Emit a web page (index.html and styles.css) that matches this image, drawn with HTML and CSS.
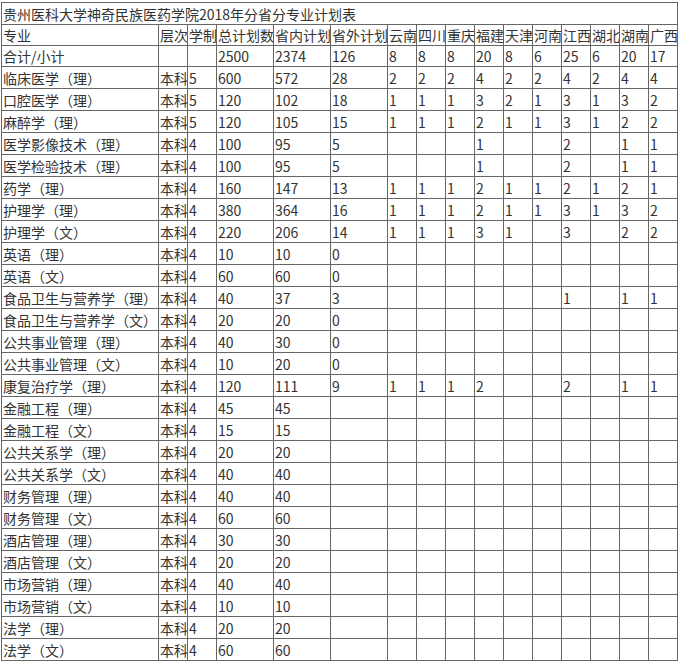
FILE: index.html
```html
<!DOCTYPE html>
<html lang="zh-CN">
<head>
<meta charset="utf-8">
<title>贵州医科大学神奇民族医药学院2018年分省分专业计划表</title>
<link rel="stylesheet" href="styles.css">
</head>
<body>
<table class="plan">
<colgroup>
<col class="c-major"><col class="c-s"><col class="c-s"><col class="c-m"><col class="c-m"><col class="c-m">
<col class="c-s"><col class="c-s"><col class="c-s"><col class="c-s"><col class="c-s"><col class="c-s"><col class="c-s"><col class="c-s"><col class="c-s"><col class="c-s">
</colgroup>
<tbody>
<tr class="title"><td colspan="16">贵州医科大学神奇民族医药学院2018年分省分专业计划表</td></tr>
<tr class="compact"><td>专业</td><td>层次</td><td>学制</td><td>总计划数</td><td>省内计划</td><td>省外计划</td><td>云南</td><td>四川</td><td>重庆</td><td>福建</td><td>天津</td><td>河南</td><td>江西</td><td>湖北</td><td>湖南</td><td>广西</td></tr>
<tr class="compact"><td>合计/小计</td><td></td><td></td><td>2500</td><td>2374</td><td>126</td><td>8</td><td>8</td><td>8</td><td>20</td><td>8</td><td>6</td><td>25</td><td>6</td><td>20</td><td>17</td></tr>
<tr><td>临床医学（理）</td><td>本科</td><td>5</td><td>600</td><td>572</td><td>28</td><td>2</td><td>2</td><td>2</td><td>4</td><td>2</td><td>2</td><td>4</td><td>2</td><td>4</td><td>4</td></tr>
<tr><td>口腔医学（理）</td><td>本科</td><td>5</td><td>120</td><td>102</td><td>18</td><td>1</td><td>1</td><td>1</td><td>3</td><td>2</td><td>1</td><td>3</td><td>1</td><td>3</td><td>2</td></tr>
<tr><td>麻醉学（理）</td><td>本科</td><td>5</td><td>120</td><td>105</td><td>15</td><td>1</td><td>1</td><td>1</td><td>2</td><td>1</td><td>1</td><td>3</td><td>1</td><td>2</td><td>2</td></tr>
<tr><td>医学影像技术（理）</td><td>本科</td><td>4</td><td>100</td><td>95</td><td>5</td><td></td><td></td><td></td><td>1</td><td></td><td></td><td>2</td><td></td><td>1</td><td>1</td></tr>
<tr><td>医学检验技术（理）</td><td>本科</td><td>4</td><td>100</td><td>95</td><td>5</td><td></td><td></td><td></td><td>1</td><td></td><td></td><td>2</td><td></td><td>1</td><td>1</td></tr>
<tr><td>药学（理）</td><td>本科</td><td>4</td><td>160</td><td>147</td><td>13</td><td>1</td><td>1</td><td>1</td><td>2</td><td>1</td><td>1</td><td>2</td><td>1</td><td>2</td><td>1</td></tr>
<tr><td>护理学（理）</td><td>本科</td><td>4</td><td>380</td><td>364</td><td>16</td><td>1</td><td>1</td><td>1</td><td>2</td><td>1</td><td>1</td><td>3</td><td>1</td><td>3</td><td>2</td></tr>
<tr><td>护理学（文）</td><td>本科</td><td>4</td><td>220</td><td>206</td><td>14</td><td>1</td><td>1</td><td>1</td><td>3</td><td>1</td><td></td><td>3</td><td></td><td>2</td><td>2</td></tr>
<tr><td>英语（理）</td><td>本科</td><td>4</td><td>10</td><td>10</td><td>0</td><td></td><td></td><td></td><td></td><td></td><td></td><td></td><td></td><td></td><td></td></tr>
<tr><td>英语（文）</td><td>本科</td><td>4</td><td>60</td><td>60</td><td>0</td><td></td><td></td><td></td><td></td><td></td><td></td><td></td><td></td><td></td><td></td></tr>
<tr><td>食品卫生与营养学（理）</td><td>本科</td><td>4</td><td>40</td><td>37</td><td>3</td><td></td><td></td><td></td><td></td><td></td><td></td><td>1</td><td></td><td>1</td><td>1</td></tr>
<tr><td>食品卫生与营养学（文）</td><td>本科</td><td>4</td><td>20</td><td>20</td><td>0</td><td></td><td></td><td></td><td></td><td></td><td></td><td></td><td></td><td></td><td></td></tr>
<tr><td>公共事业管理（理）</td><td>本科</td><td>4</td><td>40</td><td>30</td><td>0</td><td></td><td></td><td></td><td></td><td></td><td></td><td></td><td></td><td></td><td></td></tr>
<tr><td>公共事业管理（文）</td><td>本科</td><td>4</td><td>10</td><td>20</td><td>0</td><td></td><td></td><td></td><td></td><td></td><td></td><td></td><td></td><td></td><td></td></tr>
<tr><td>康复治疗学（理）</td><td>本科</td><td>4</td><td>120</td><td>111</td><td>9</td><td>1</td><td>1</td><td>1</td><td>2</td><td></td><td></td><td>2</td><td></td><td>1</td><td>1</td></tr>
<tr><td>金融工程（理）</td><td>本科</td><td>4</td><td>45</td><td>45</td><td></td><td></td><td></td><td></td><td></td><td></td><td></td><td></td><td></td><td></td><td></td></tr>
<tr><td>金融工程（文）</td><td>本科</td><td>4</td><td>15</td><td>15</td><td></td><td></td><td></td><td></td><td></td><td></td><td></td><td></td><td></td><td></td><td></td></tr>
<tr><td>公共关系学（理）</td><td>本科</td><td>4</td><td>20</td><td>20</td><td></td><td></td><td></td><td></td><td></td><td></td><td></td><td></td><td></td><td></td><td></td></tr>
<tr><td>公共关系学（文）</td><td>本科</td><td>4</td><td>40</td><td>40</td><td></td><td></td><td></td><td></td><td></td><td></td><td></td><td></td><td></td><td></td><td></td></tr>
<tr><td>财务管理（理）</td><td>本科</td><td>4</td><td>40</td><td>40</td><td></td><td></td><td></td><td></td><td></td><td></td><td></td><td></td><td></td><td></td><td></td></tr>
<tr><td>财务管理（文）</td><td>本科</td><td>4</td><td>60</td><td>60</td><td></td><td></td><td></td><td></td><td></td><td></td><td></td><td></td><td></td><td></td><td></td></tr>
<tr><td>酒店管理（理）</td><td>本科</td><td>4</td><td>30</td><td>30</td><td></td><td></td><td></td><td></td><td></td><td></td><td></td><td></td><td></td><td></td><td></td></tr>
<tr><td>酒店管理（文）</td><td>本科</td><td>4</td><td>20</td><td>20</td><td></td><td></td><td></td><td></td><td></td><td></td><td></td><td></td><td></td><td></td><td></td></tr>
<tr><td>市场营销（理）</td><td>本科</td><td>4</td><td>40</td><td>40</td><td></td><td></td><td></td><td></td><td></td><td></td><td></td><td></td><td></td><td></td><td></td></tr>
<tr><td>市场营销（文）</td><td>本科</td><td>4</td><td>10</td><td>10</td><td></td><td></td><td></td><td></td><td></td><td></td><td></td><td></td><td></td><td></td><td></td></tr>
<tr><td>法学（理）</td><td>本科</td><td>4</td><td>20</td><td>20</td><td></td><td></td><td></td><td></td><td></td><td></td><td></td><td></td><td></td><td></td><td></td></tr>
<tr><td>法学（文）</td><td>本科</td><td>4</td><td>60</td><td>60</td><td></td><td></td><td></td><td></td><td></td><td></td><td></td><td></td><td></td><td></td><td></td></tr>
</tbody>
</table>
</body>
</html>
```
FILE: styles.css
```css
html, body {
  margin: 0;
  padding: 0;
  background: #fff;
}
body {
  padding: 2px 0 0 1px;
  font-family: "Noto Sans CJK SC", "Noto Sans", sans-serif;
  font-size: 14px;
  color: #333;
}
.plan {
  table-layout: fixed;
  border-collapse: separate;
  border-spacing: 0;
  width: 677px;
  border-left: 1px solid #666;
  border-top: 1px solid #666;
}
.c-major { width: 157px; }
.c-s { width: 29px; }
.c-m { width: 57px; }
.plan td {
  box-sizing: border-box;
  height: 22px;
  padding: 0 0 0 1px;
  border-right: 1px solid #666;
  border-bottom: 1px solid #666;
  white-space: nowrap;
  overflow: hidden;
  line-height: 20px;
  vertical-align: middle;
}
.plan .title td {
  height: 22px;
}
.plan .compact td {
  height: 21px;
}
```
